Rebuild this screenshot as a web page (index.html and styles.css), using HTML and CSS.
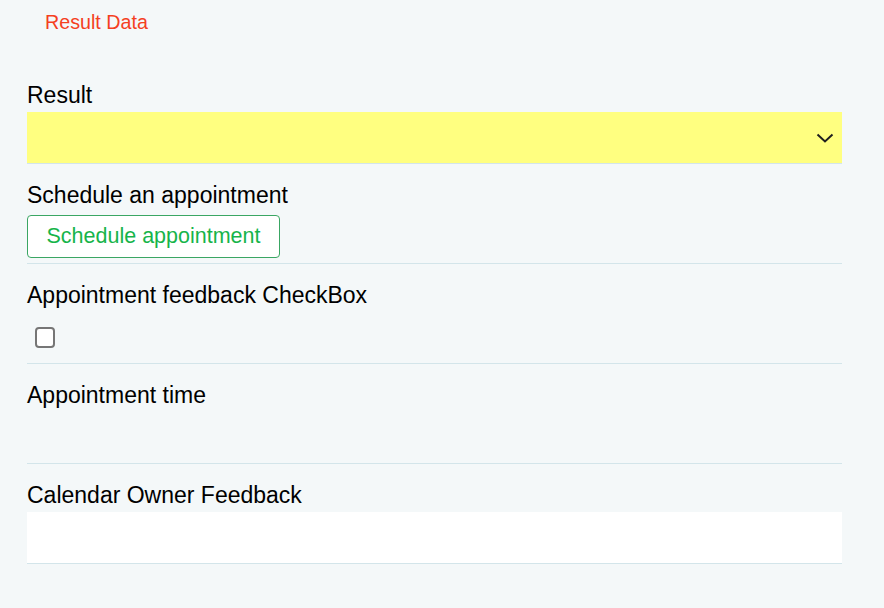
FILE: index.html
```html
<!DOCTYPE html>
<html>
<head>
<meta charset="utf-8">
<link rel="stylesheet" href="styles.css">
</head>
<body>
<div class="page">
  <div class="header"><span class="title">Result Data</span></div>
  <div class="form">
    <div class="field">
      <div class="label">Result</div>
      <div class="control select">
        <svg class="chev" width="18" height="10" viewBox="0 0 18 10"><path d="M1.5 1.5 L9 8.5 L16.5 1.5" fill="none" stroke="#1f1f1f" stroke-width="2"/></svg>
      </div>
    </div>
    <div class="field">
      <div class="label">Schedule an appointment</div>
      <div class="control">
        <button class="btn">Schedule appointment</button>
      </div>
    </div>
    <div class="field">
      <div class="label">Appointment feedback CheckBox</div>
      <div class="control center">
        <span class="checkbox"></span>
      </div>
    </div>
    <div class="field">
      <div class="label">Appointment time</div>
      <div class="control"></div>
    </div>
    <div class="field">
      <div class="label">Calendar Owner Feedback</div>
      <div class="control white"></div>
    </div>
  </div>
</div>
</body>
</html>
```
FILE: styles.css
```css
html, body {
  margin: 0;
  padding: 0;
  background: #f4f8f9;
  font-family: "Liberation Sans", Arial, sans-serif;
  color: #000;
}
.page {
  width: 884px;
  height: 608px;
  box-sizing: border-box;
  padding-left: 27px;
}
.header {
  height: 64px;
  box-sizing: border-box;
  padding-left: 18px;
  padding-top: 10px;
}
.title {
  font-size: 19.7px;
  line-height: 24px;
  color: #f5401f;
}
.form {
  width: 815px;
}
.field {
  padding-top: 19px;
  border-bottom: 1px solid #d3e5ea;
  display: flex;
  flex-direction: column;
  gap: 5px;
}
.label {
  font-size: 23px;
  line-height: 24px;
  height: 24px;
  white-space: nowrap;
}
.control {
  height: 51px;
  display: flex;
  align-items: flex-start;
}
.control.center {
  align-items: center;
}
.select {
  background: #ffff80;
  justify-content: flex-end;
  align-items: center;
}
.chev {
  margin-right: 8px;
  margin-top: 0;
}
.white {
  background: #ffffff;
}
.btn {
  margin-top: 3px;
  height: 43px;
  width: 253px;
  box-sizing: border-box;
  background: #ffffff;
  border: 1px solid #3aa663;
  border-radius: 4px;
  color: #16b44a;
  font-family: "Liberation Sans", Arial, sans-serif;
  font-size: 21.5px;
  padding: 0;
}
.checkbox {
  display: block;
  width: 20px;
  height: 21px;
  box-sizing: border-box;
  margin-left: 8px;
  border: 2px solid #767676;
  border-radius: 4px;
  background: #fff;
}
```
